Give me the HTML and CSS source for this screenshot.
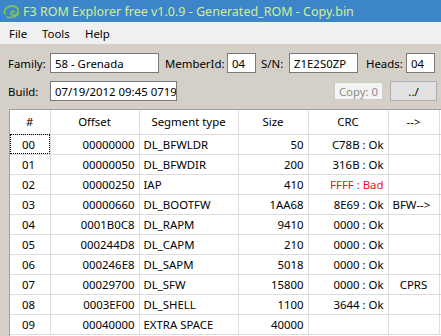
FILE: index.html
```html
<!DOCTYPE html>
<html lang="en">
<head>
    <meta charset="UTF-8">
    <title>F3 ROM Explorer free v1.0.9</title>
    <link rel="stylesheet" href="styles.css">
</head>
<body>
    <header class="titulo">
        <svg class="logo" width="17" height="16" viewBox="0 0 17 16">
            <path d="M2 11 C0 7 4 3 9 3 C14 3 17 7 14 11 C12 13 8 13 8 10 C8 8 11 8 11 9" fill="none" stroke="#7fc24a" stroke-width="1.8" stroke-linecap="round"/>
            <path d="M4 14 C8 15 13 14 16 11" fill="none" stroke="#7fc24a" stroke-width="1.4" stroke-linecap="round"/>
        </svg>
        <span>F3 ROM Explorer free v1.0.9 - Generated_ROM - Copy.bin</span>
    </header>
    <nav class="menu">
        <span class="m-file">File</span>
        <span class="m-tools">Tools</span>
        <span>Help</span>
    </nav>

    <section class="form">
        <div class="linha">
            <label class="rot rot-family">Family:</label>
            <input class="caixa cx-family" type="text" value="58 - Grenada" readonly>
            <label class="rot rot-member">MemberId:</label>
            <input class="caixa cx-curta" type="text" value="04" readonly>
            <label class="rot rot-sn">S/N:</label>
            <input class="caixa cx-sn" type="text" value="Z1E2S0ZP" readonly>
            <label class="rot rot-heads">Heads:</label>
            <input class="caixa cx-curta" type="text" value="04" readonly>
        </div>
        <div class="linha">
            <label class="rot rot-family">Build:</label>
            <input class="caixa cx-build" type="text" value="07/19/2012 09:45 0719" readonly>
            <input class="botao desativado" type="button" value="Copy: 0" disabled>
            <input class="botao voltar" type="button" value="../">
        </div>
    </section>

    <section class="lista">
        <table>
            <thead>
                <tr>
                    <th class="c-num">#</th>
                    <th class="c-off">Offset</th>
                    <th class="c-seg">Segment type</th>
                    <th class="c-size">Size</th>
                    <th class="c-crc">CRC</th>
                    <th class="c-seta">--&gt;</th>
                    <th class="c-resto"></th>
                </tr>
            </thead>
            <tbody>
                <tr><td class="foco">00</td><td class="dir">00000000</td><td>DL_BFWLDR</td><td class="dir">50</td><td class="dir">C78B : Ok</td><td></td><td></td></tr>
                <tr><td>01</td><td class="dir">00000050</td><td>DL_BFWDIR</td><td class="dir">200</td><td class="dir">316B : Ok</td><td></td><td></td></tr>
                <tr><td>02</td><td class="dir">00000250</td><td>IAP</td><td class="dir">410</td><td class="dir ruim">FFFF : Bad</td><td></td><td></td></tr>
                <tr><td>03</td><td class="dir">00000660</td><td>DL_BOOTFW</td><td class="dir">1AA68</td><td class="dir">8E69 : Ok</td><td>BFW--&gt;</td><td></td></tr>
                <tr><td>04</td><td class="dir">0001B0C8</td><td>DL_RAPM</td><td class="dir">9410</td><td class="dir">0000 : Ok</td><td></td><td></td></tr>
                <tr><td>05</td><td class="dir">000244D8</td><td>DL_CAPM</td><td class="dir">210</td><td class="dir">0000 : Ok</td><td></td><td></td></tr>
                <tr><td>06</td><td class="dir">000246E8</td><td>DL_SAPM</td><td class="dir">5018</td><td class="dir">0000 : Ok</td><td></td><td></td></tr>
                <tr><td>07</td><td class="dir">00029700</td><td>DL_SFW</td><td class="dir">15800</td><td class="dir">0000 : Ok</td><td class="meio">CPRS</td><td></td></tr>
                <tr><td>08</td><td class="dir">0003EF00</td><td>DL_SHELL</td><td class="dir">1100</td><td class="dir">3644 : Ok</td><td></td><td></td></tr>
                <tr><td>09</td><td class="dir">00040000</td><td>EXTRA SPACE</td><td class="dir">40000</td><td class="dir"></td><td></td><td></td></tr>
            </tbody>
        </table>
    </section>
</body>
</html>
```

FILE: styles.css
```css
* {
box-sizing: border-box;
}

body {
margin: 0;
height: 336px;
overflow: hidden;
background-color: #d4d0c8;
font-family: 'Noto Sans', sans-serif;
font-size: 11.4px;
color: #000;
}

.titulo {
display: flex;
align-items: center;
gap: 3px;
height: 22px;
padding-left: 3px;
background-color: #3d85c9;
color: #d2ef8e;
font-size: 12.5px;
}

.logo {
flex: none;
}

.menu {
display: flex;
height: 22px;
align-items: center;
padding-left: 9px;
background-color: #f0f0f0;
}

.m-file {
width: 33px;
}

.m-tools {
width: 43px;
}

.form {
padding: 9px 0 0 8px;
}

.linha {
display: flex;
align-items: center;
height: 20px;
margin-bottom: 8px;
}

.rot {
flex: none;
}

.rot-family {
width: 42px;
}

.rot-member {
margin-left: 6px;
width: 62px;
}

.rot-sn {
margin-left: 5px;
width: 28px;
}

.rot-heads {
margin-left: 8px;
width: 40px;
}

input {
font-family: inherit;
font-size: inherit;
color: inherit;
}

.caixa {
height: 20px;
border: 1px solid #7a7a7a;
background-color: #fff;
padding: 0 0 0 4px;
}

.cx-family {
width: 109px;
}

.cx-curta {
width: 29px;
}

.cx-sn {
width: 69px;
}

.cx-build {
width: 127px;
}

.botao {
height: 19px;
padding: 0;
}

.desativado {
margin-left: 157px;
width: 49px;
height: 18px;
border: 1px solid #cccccc;
background-color: #f4f4f4;
color: #8d8d8d;
}

.voltar {
margin-left: 7px;
width: 47px;
height: 20px;
border: 1px solid #adadad;
background-color: #e1e1e1;
}

.lista {
margin: 0 0 0 9px;
height: 240px;
border-top: 1px solid #a0a0a0;
border-left: 1px solid #a0a0a0;
background-color: #fff;
overflow: hidden;
}

table {
border-collapse: collapse;
table-layout: fixed;
width: 440px;
}

th {
height: 24px;
font-weight: normal;
text-align: center;
border-right: 1px solid #dcdcdc;
border-bottom: 1px solid #dcdcdc;
padding: 0;
}

td {
height: 20px;
border-right: 1px solid #dcdcdc;
border-bottom: 1px solid #dcdcdc;
padding: 0 4px 0 4px;
white-space: nowrap;
}

td:first-child {
padding-left: 12px;
}

.dir {
text-align: right;
}

.meio {
text-align: center;
}

.ruim {
color: #e8101e;
}

.foco {
outline: 1px dotted #000;
outline-offset: -1px;
}

.c-num { width: 40px; }
.c-off { width: 89px; }
.c-seg { width: 99px; }
.c-size { width: 70px; }
.c-crc { width: 80px; }
.c-seta { width: 51px; }
.c-resto { width: 11px; }
```
